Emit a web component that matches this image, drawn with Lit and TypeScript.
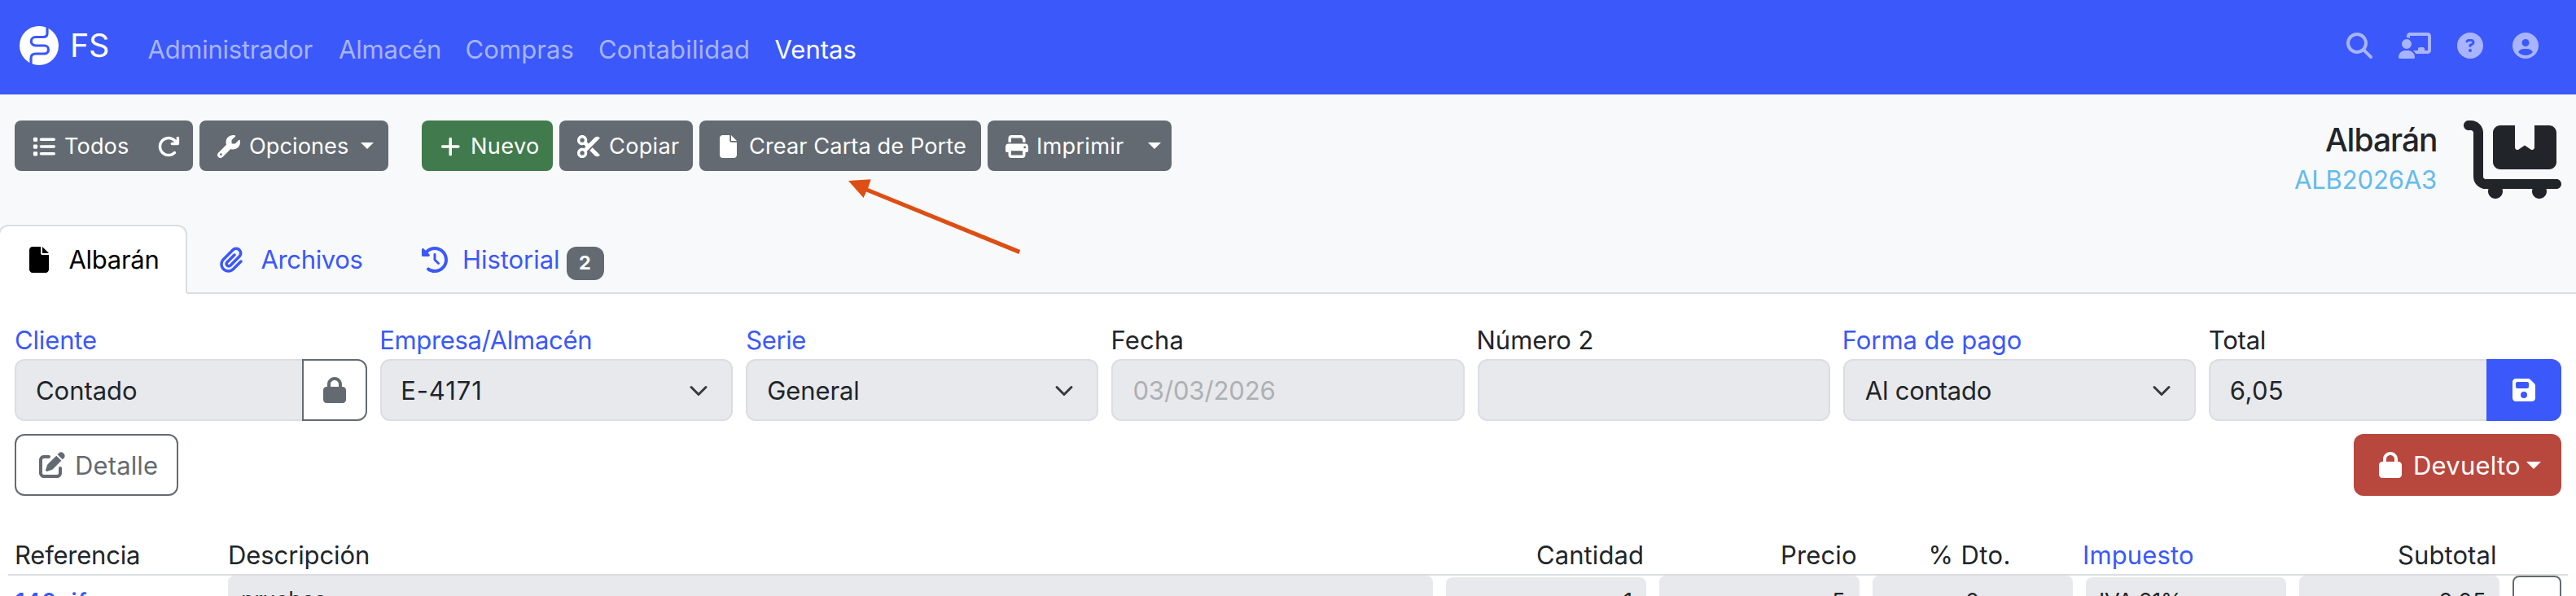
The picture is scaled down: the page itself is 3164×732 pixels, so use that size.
import { LitElement, html, css, svg, nothing } from "lit";
import { customElement } from "lit/decorators.js";

const FAMILY = 'Inter, "Liberation Sans", sans-serif';

const ICONS: Record<string, [number, string]> = {
  list: [512, "M40 48C26.7 48 16 58.7 16 72v48c0 13.3 10.7 24 24 24H88c13.3 0 24-10.7 24-24V72c0-13.3-10.7-24-24-24H40zM192 64c-17.7 0-32 14.3-32 32s14.3 32 32 32H480c17.7 0 32-14.3 32-32s-14.3-32-32-32H192zm0 160c-17.7 0-32 14.3-32 32s14.3 32 32 32H480c17.7 0 32-14.3 32-32s-14.3-32-32-32H192zm0 160c-17.7 0-32 14.3-32 32s14.3 32 32 32H480c17.7 0 32-14.3 32-32s-14.3-32-32-32H192zM16 232v48c0 13.3 10.7 24 24 24H88c13.3 0 24-10.7 24-24V232c0-13.3-10.7-24-24-24H40c-13.3 0-24 10.7-24 24zM40 368c-13.3 0-24 10.7-24 24v48c0 13.3 10.7 24 24 24H88c13.3 0 24-10.7 24-24V392c0-13.3-10.7-24-24-24H40z"],
  redo: [512, "M386.3 160H336c-17.7 0-32 14.3-32 32s14.3 32 32 32H464c17.7 0 32-14.3 32-32V64c0-17.7-14.3-32-32-32s-32 14.3-32 32v51.2L414.4 97.6c-87.5-87.5-229.3-87.5-316.8 0s-87.5 229.3 0 316.8s229.3 87.5 316.8 0c12.5-12.5 12.5-32.8 0-45.3s-32.8-12.5-45.3 0c-62.5 62.5-163.8 62.5-226.3 0s-62.5-163.8 0-226.3s163.8-62.5 226.3 0L386.3 160z"],
  wrench: [512, "M352 320c88.4 0 160-71.6 160-160c0-15.3-2.2-30.1-6.2-44.2c-3.1-10.8-16.4-13.2-24.3-5.3l-76.8 76.8c-3 3-7.1 4.7-11.3 4.7H336c-8.8 0-16-7.2-16-16V118.6c0-4.2 1.7-8.3 4.7-11.3l76.8-76.8c7.9-7.9 5.4-21.2-5.3-24.3C382.1 2.2 367.3 0 352 0C263.6 0 192 71.6 192 160c0 19.1 3.4 37.5 9.5 54.5L19.9 396.1C7.2 408.8 0 426.1 0 444.1C0 481.6 30.4 512 67.9 512c18 0 35.3-7.2 48-19.9L297.5 310.5c17 6.2 35.4 9.5 54.5 9.5zM80 408a24 24 0 1 1 0 48 24 24 0 1 1 0-48z"],
  plus: [448, "M256 80c0-17.7-14.3-32-32-32s-32 14.3-32 32V224H48c-17.7 0-32 14.3-32 32s14.3 32 32 32H192V432c0 17.7 14.3 32 32 32s32-14.3 32-32V288H400c17.7 0 32-14.3 32-32s-14.3-32-32-32H256V80z"],
  scissors: [512, "M256 192l-39.5-39.5c4.9-12.6 7.5-26.2 7.5-40.5C224 50.1 173.9 0 112 0S0 50.1 0 112s50.1 112 112 112c14.3 0 27.9-2.7 40.5-7.5L192 256l-39.5 39.5c-12.6-4.9-26.2-7.5-40.5-7.5C50.1 288 0 338.1 0 400s50.1 112 112 112s112-50.1 112-112c0-14.3-2.7-27.9-7.5-40.5L499.2 76.8c7.1-7.1 7.1-18.5 0-25.6c-28.3-28.3-74.1-28.3-102.4 0L256 192zm22.6 150.6L396.8 460.8c28.3 28.3 74.1 28.3 102.4 0c7.1-7.1 7.1-18.5 0-25.6L342.6 278.6l-64 64zM64 112a48 48 0 1 1 96 0 48 48 0 1 1 -96 0zm48 240a48 48 0 1 1 0 96 48 48 0 1 1 0-96z"],
  file: [384, "M0 64C0 28.7 28.7 0 64 0H224V128c0 17.7 14.3 32 32 32H384V448c0 35.3-28.7 64-64 64H64c-35.3 0-64-28.7-64-64V64zm384 64H256V0L384 128z"],
  print: [512, "M128 0C92.7 0 64 28.7 64 64v96h64V64H354.7L384 93.3V160h64V93.3c0-17-6.7-33.3-18.7-45.3L400 18.7C388 6.7 371.7 0 354.7 0H128zM384 352v32 64H128V384 368 352H384zm64 32h32c17.7 0 32-14.3 32-32V256c0-35.3-28.7-64-64-64H64c-35.3 0-64 28.7-64 64v96c0 17.7 14.3 32 32 32H64v64c0 35.3 28.7 64 64 64H384c35.3 0 64-28.7 64-64V384zM432 248a24 24 0 1 1 0 48 24 24 0 1 1 0-48z"],
  clip: [448, "M364.2 83.8c-24.4-24.4-64-24.4-88.4 0l-184 184c-42.1 42.1-42.1 110.3 0 152.4s110.3 42.1 152.4 0l152-152c10.9-10.9 28.7-10.9 39.6 0s10.9 28.7 0 39.6l-152 152c-64 64-167.6 64-231.6 0s-64-167.6 0-231.6l184-184c46.3-46.3 121.3-46.3 167.6 0s46.3 121.3 0 167.6l-176 176c-28.6 28.6-75 28.6-103.6 0s-28.6-75 0-103.6l144-144c10.9-10.9 28.7-10.9 39.6 0s10.9 28.7 0 39.6l-144 144c-6.7 6.7-6.7 17.7 0 24.4s17.7 6.7 24.4 0l176-176c24.4-24.4 24.4-64 0-88.4z"],
  history: [512, "M75 75L41 41C25.9 25.9 0 36.6 0 57.9V168c0 13.3 10.7 24 24 24H134.1c21.4 0 32.1-25.9 17-41l-30.8-30.8C155 85.5 203 64 256 64c106 0 192 86 192 192s-86 192-192 192c-40.8 0-78.6-12.7-109.7-34.4c-14.5-10.1-34.4-6.6-44.6 7.9s-6.6 34.4 7.9 44.6C151.2 495 201.7 512 256 512c141.4 0 256-114.6 256-256S397.4 0 256 0C185.3 0 121.3 28.7 75 75zm181 53c-13.3 0-24 10.7-24 24V256c0 6.4 2.5 12.5 7 17l72 72c9.4 9.4 24.6 9.4 33.9 0s9.4-24.6 0-33.9l-65-65V152c0-13.3-10.7-24-24-24z"],
  search: [512, "M416 208c0 45.9-14.9 88.3-40 122.7L502.6 457.4c12.5 12.5 12.5 32.8 0 45.3s-32.8 12.5-45.3 0L330.7 376c-34.4 25.2-76.8 40-122.7 40C93.1 416 0 322.9 0 208S93.1 0 208 0S416 93.1 416 208zM208 352a144 144 0 1 0 0-288 144 144 0 1 0 0 288z"],
  teacher: [640, "M160 64c0-35.3 28.7-64 64-64H576c35.3 0 64 28.7 64 64V352c0 35.3-28.7 64-64 64H336.8c-11.8-25.5-29.9-47.5-52.4-64H384V320c0-17.7 14.3-32 32-32h64c17.7 0 32 14.3 32 32v32h64V64L224 64v49.1C205.2 102.2 183.3 96 160 96V64zm0 64a96 96 0 1 1 0 192 96 96 0 1 1 0-192zM133.3 352h53.3C260.3 352 320 411.7 320 485.3c0 14.7-11.9 26.7-26.7 26.7H26.7C11.9 512 0 500.1 0 485.3C0 411.7 59.7 352 133.3 352z"],
  question: [512, "M256 512A256 256 0 1 0 256 0a256 256 0 1 0 0 512zM169.8 165.3c7.9-22.3 29.1-37.3 52.8-37.3h58.3c34.9 0 63.1 28.3 63.1 63.1c0 22.6-12.1 43.5-31.7 54.8L280 264.4c-.2 13-10.9 23.6-24 23.6c-13.3 0-24-10.7-24-24V250.5c0-8.6 4.6-16.5 12.1-20.8l44.3-25.4c4.7-2.7 7.6-7.7 7.6-13.1c0-8.4-6.8-15.1-15.1-15.1H222.6c-3.4 0-6.4 2.1-7.5 5.3l-.4 1.2c-4.4 12.5-18.2 19-30.6 14.6s-19-18.2-14.6-30.6l.4-1.2zM224 352a32 32 0 1 1 64 0 32 32 0 1 1 -64 0z"],
  user: [512, "M399 384.2C376.9 345.8 335.4 320 288 320H224c-47.4 0-88.9 25.8-111 64.2c35.2 39.2 86.2 63.8 143 63.8s107.8-24.7 143-63.8zM0 256a256 256 0 1 1 512 0A256 256 0 1 1 0 256zm256 16a72 72 0 1 0 0-144 72 72 0 1 0 0 144z"],
  cart: [640, "M32 0C14.3 0 0 14.3 0 32S14.3 64 32 64H48c8.8 0 16 7.2 16 16V368c0 44.2 35.8 80 80 80h18.7c-1.8 5-2.7 10.4-2.7 16c0 26.5 21.5 48 48 48s48-21.5 48-48c0-5.6-1-11-2.7-16H450.7c-1.8 5-2.7 10.4-2.7 16c0 26.5 21.5 48 48 48s48-21.5 48-48c0-5.6-1-11-2.7-16H608c17.7 0 32-14.3 32-32s-14.3-32-32-32H144c-8.8 0-16-7.2-16-16V80C128 35.8 92.2 0 48 0H32zM192 80V272c0 26.5 21.5 48 48 48H560c26.5 0 48-21.5 48-48V80c0-26.5-21.5-48-48-48H464V176c0 5.9-3.2 11.3-8.5 14.1s-11.5 2.5-16.4-.8L400 163.2l-39.1 26.1c-4.9 3.3-11.2 3.6-16.4 .8s-8.5-8.2-8.5-14.1V32H240c-26.5 0-48 21.5-48 48z"],
  lock: [448, "M144 144v48H304V144c0-44.2-35.8-80-80-80s-80 35.8-80 80zM80 192V144C80 64.5 144.5 0 224 0s144 64.5 144 144v48h16c35.3 0 64 28.7 64 64V448c0 35.3-28.7 64-64 64H64c-35.3 0-64-28.7-64-64V256c0-35.3 28.7-64 64-64H80z"],
  save: [448, "M64 32C28.7 32 0 60.7 0 96V416c0 35.3 28.7 64 64 64H384c35.3 0 64-28.7 64-64V173.3c0-17-6.7-33.3-18.7-45.3L352 50.7C340 38.7 323.7 32 306.7 32H64zm0 96c0-17.7 14.3-32 32-32H288c17.7 0 32 14.3 32 32v64c0 17.7-14.3 32-32 32H96c-17.7 0-32-14.3-32-32V128zM224 288a64 64 0 1 1 0 128 64 64 0 1 1 0-128z"],
  edit: [512, "M471.6 21.7c-21.9-21.9-57.3-21.9-79.2 0L362.3 51.7l97.9 97.9 30.1-30.1c21.9-21.9 21.9-57.3 0-79.2L471.6 21.7zm-299.2 220c-6.1 6.1-10.8 13.6-13.5 21.9l-29.6 88.8c-2.9 8.6-.6 18.1 5.8 24.6s15.9 8.7 24.6 5.8l88.8-29.6c8.2-2.7 15.7-7.4 21.9-13.5L437.7 172.3 339.7 74.3 172.4 241.7zM96 64C43 64 0 107 0 160V416c0 53 43 96 96 96H352c53 0 96-43 96-96V320c0-17.7-14.3-32-32-32s-32 14.3-32 32v96c0 17.7-14.3 32-32 32H96c-17.7 0-32-14.3-32-32V160c0-17.7 14.3-32 32-32h96c17.7 0 32-14.3 32-32s-14.3-32-32-32H96z"],
};

const icon = (name: string, size = 32) => {
  const [w, d] = ICONS[name];
  return html`<svg class="icon" width=${(w / 512) * size} height=${size} viewBox="0 0 ${w} 512">
    ${svg`<path fill="currentColor" d=${d}></path>`}
  </svg>`;
};

/* Icon centred in a slot 1.25 times as wide as its size */
const slot = (name: string, size = 28) =>
  html`<span class="slot ${size === 28 ? "small" : ""}">${icon(name, size)}</span>`;

type Face = "md" | "sm" | "brand" | "title" | "badge" | "strong";
const FACES: Record<Face, [number, number]> = {
  md: [31, 400],
  sm: [27.2, 400],
  brand: [39.5, 400],
  title: [39, 500],
  badge: [23.5, 700],
  strong: [27, 600],
};
const pen = document.createElement("canvas").getContext("2d")!;

/* A run of text tracked so that its ink is exactly `width` pixels wide */
const run = (text: string, width: number, face: Face = "md") => {
  const [size, weight] = FACES[face];
  pen.font = `${weight} ${size}px ${FAMILY}`;
  const m = pen.measureText(text);
  const ink = m.actualBoundingBoxLeft + m.actualBoundingBoxRight;
  const track = text.length > 1 ? (width - ink) / (text.length - 1) : 0;
  return html`<span
    class="run ${face}"
    style="width:${width}px;text-indent:${m.actualBoundingBoxLeft.toFixed(2)}px;letter-spacing:${track.toFixed(3)}px"
    >${text}</span
  >`;
};

const caret = html`<svg class="caret" width="16" height="8" viewBox="0 0 16 8"><path d="M0 0h16L8 8z" fill="currentColor" /></svg>`;
const chevron = html`<svg class="chevron" width="24" height="24" viewBox="0 0 16 16">
  <path d="m2 5 6 6 6-6" fill="none" stroke="#343a40" stroke-width="2" stroke-linecap="round" stroke-linejoin="round" />
</svg>`;

interface Field {
  label: string;
  labelWidth: number;
  link?: boolean;
  value: string;
  valueWidth: number;
  select?: boolean;
  muted?: boolean;
  addon?: "lock" | "save";
}

const FIELDS: Field[] = [
  { label: "Cliente", labelWidth: 99, link: true, value: "Contado", valueWidth: 122, addon: "lock" },
  { label: "Empresa/Almacén", labelWidth: 257, link: true, value: "E-4171", valueWidth: 95, select: true },
  { label: "Serie", labelWidth: 72, link: true, value: "General", valueWidth: 111, select: true },
  { label: "Fecha", labelWidth: 86, value: "03/03/2026", valueWidth: 173, muted: true },
  { label: "Número 2", labelWidth: 140, value: "", valueWidth: 0 },
  { label: "Forma de pago", labelWidth: 217, link: true, value: "Al contado", valueWidth: 154, select: true },
  { label: "Total", labelWidth: 68, value: "6,05", valueWidth: 63, addon: "save" },
];

@customElement("app-root")
export class AppRoot extends LitElement {
  static styles = css`
    :host {
      display: block;
      position: relative;
      height: 732px;
      overflow: hidden;
      background: #fff;
      color: #212529;
      font-family: Inter, "Liberation Sans", sans-serif;
    }
    * { box-sizing: border-box; }
    .icon, .caret, .chevron { display: block; flex: none; }
    .run { display: block; flex: none; white-space: pre; line-height: 48px; }
    .md { font-size: 31px; }
    .sm { font-size: 27.2px; }
    .brand { font-size: 39.5px; }
    .title { font-size: 39px; font-weight: 500; }
    .badge { font-size: 23.5px; font-weight: 700; }
    .strong { font-size: 27px; font-weight: 600; }
    .slot { display: flex; justify-content: center; flex: none; width: 40px; }
    .slot.small { width: 35px; }

    .navbar {
      display: flex;
      align-items: center;
      height: 116px;
      padding: 0 46px 4px 24px;
      background: #3b58fb;
      color: #fff;
    }
    .logo { display: block; margin: 0 17px 0 0; }
    .menu { display: flex; gap: 32.5px; margin-left: 48.5px; padding-top: 9px; }
    .menu > *, .tools { color: #a8b4fd; }
    .menu > .current { color: #fff; }
    .tools { display: flex; gap: 32px; margin-left: auto; }
    .tools > :last-child { margin-left: 4px; }

    .header {
      display: flex;
      flex-direction: column;
      justify-content: space-between;
      height: 245px;
      padding-top: 32px;
      background: #f8f9fb;
    }
    .toolbar { display: flex; height: 96px; padding: 0 18px; align-items: flex-start; }
    .btn {
      display: flex;
      align-items: center;
      height: 62px;
      margin-right: 8px;
      padding: 2px 0 0 18px;
      border-radius: 8px;
      background: #636a72;
      color: #fff;
    }
    .btn .run { margin-left: 9px; }
    .todos { width: 219px; }
    .todos > .icon { margin-left: 36px; }
    .opciones { width: 232px; margin-right: 41px; }
    .opciones .caret { margin-left: 16px; }
    .nuevo { width: 161px; background: #417a4c; }
    .copiar { width: 164px; }
    .carta { width: 346px; }
    .imprimir { width: 226px; margin-right: 0; }
    .imprimir .caret { margin-left: 30px; }
    .btn .caret { margin-top: -3px; }

    .heading { display: flex; margin-left: auto; }
    .heading-text { display: flex; flex-direction: column; align-items: flex-end; padding: 0 1px 0 0; margin-right: 33px; }
    .code { color: #64bbec; padding-top: 1px; }
    .tabs { display: flex; height: 85px; border-bottom: 2px solid #dbdde3; }
    .tab { display: flex; align-items: center; height: 85px; color: #3b58fb; }
    .tab.active {
      width: 232px;
      margin-left: -2px;
      padding-left: 28px;
      background: #fff;
      border: 2px solid #dbdde3;
      border-bottom-color: #fff;
      border-radius: 12px 12px 0 0;
      color: #000;
    }
    .tab.archivos { padding-left: 34px; }
    .tab.historial { padding-left: 69px; }
    .tab .run { margin-left: 16.5px; }
    .count {
      display: flex;
      align-items: center;
      justify-content: center;
      width: 46px;
      height: 41px;
      margin: 9px 0 0 10px;
      border-radius: 12px;
      background: #636a72;
      color: #fff;
    }
    .count .run { margin: 0; }

    .fields { display: grid; grid-template-columns: repeat(7, 1fr); gap: 16px; padding: 32px 18px 0; }
    .label { height: 48px; padding: 1px 0 0 1px; }
    .link { color: #3b58fb; }
    .control { display: flex; height: 76px; }
    .input {
      display: flex;
      align-items: center;
      justify-content: space-between;
      flex: 1;
      padding: 1px 28px 0 25px;
      border: 2px solid #dcdde3;
      border-radius: 12px;
      background: #e8e9ec;
    }
    .muted { color: #adb0b3; }
    .joined { border-right: 0; border-radius: 12px 0 0 12px; }
    .addon {
      display: flex;
      align-items: center;
      justify-content: center;
      border-radius: 0 12px 12px 0;
    }
    .addon.lock { width: 80px; border: 2px solid #636a72; color: #636a72; }
    .addon.save { width: 92px; background: #3b58fb; color: #fff; }

    .actions { display: flex; justify-content: space-between; padding: 16px 18px 0; }
    .detalle, .devuelto { display: flex; align-items: center; height: 76px; border-radius: 12px; }
    .detalle { width: 201px; padding-left: 24px; border: 2px solid #636a72; color: #636a72; }
    .detalle .run { margin-left: 10px; padding-top: 1px; }
    .devuelto { width: 255px; padding-left: 25px; background: #b8473d; color: #fff; }
    .devuelto .run { margin-left: 10px; padding-top: 1px; }
    .devuelto .caret { margin-left: 9px; width: 18px; height: 9px; }

    .lines { margin: 48px 10px 0; }
    .row {
      display: grid;
      grid-template-columns: 246px 1480px repeat(5, 246px) 60px;
      gap: 16px;
      padding: 0 8px;
    }
    .head { border-bottom: 2px solid #dbdde3; height: 50px; padding-top: 1px; }
    .head > * { margin-left: 2px; }
    .head > .right { justify-self: end; margin-right: 5px; }
    .head > .center { justify-self: center; margin-right: 9px; }
    .head > .tax { margin-left: -2px; }
    .body { align-items: start; }
    .cell {
      display: flex;
      height: 66px;
      padding: 8px 18px 0;
      border-radius: 8px;
      background: #e8e9ec;
    }
    .cell.area { padding-top: 6px; }
    .cell.low { margin-top: 2px; padding-top: 6px; }
    .cell.right { justify-content: flex-end; }
    .cell.center { justify-content: center; }
    .ref { padding: 8px 0 0 2px; }
    .more { height: 66px; border: 2px solid #636a72; border-radius: 8px; }

    .arrow { position: absolute; left: 1040px; top: 216px; }
  `;

  private field(f: Field) {
    return html`<div class="field">
      <div class="label ${f.link ? "link" : ""}">${run(f.label, f.labelWidth)}</div>
      <div class="control">
        <div class="input ${f.addon ? "joined" : ""} ${f.muted ? "muted" : ""}">
          ${f.value ? run(f.value, f.valueWidth) : nothing} ${f.select ? chevron : nothing}
        </div>
        ${f.addon ? html`<div class="addon ${f.addon}">${icon(f.addon)}</div>` : nothing}
      </div>
    </div>`;
  }

  render() {
    return html`
      <nav class="navbar">
        <svg class="logo" width="48" height="48" viewBox="0 0 48 48">
          <circle cx="24" cy="24" r="24" fill="#fff" />
          <path
            d="M34 0V9Q34 13.5 29 13.5H19.5A5.2 5.2 0 0 0 19.5 24H30.5A5 5 0 0 1 30.5 34H20Q14 34 14 39.5V48"
            fill="none" stroke="#3b58fb" stroke-width="3.2"
          />
        </svg>
        ${run("FS", 44, "brand")}
        <div class="menu">
          <span>${run("Administrador", 202)}</span>
          <span>${run("Almacén", 124)}</span>
          <span>${run("Compras", 131)}</span>
          <span>${run("Contabilidad", 183)}</span>
          <span class="current">${run("Ventas", 99)}</span>
        </div>
        <div class="tools">${icon("search")}${icon("teacher")}${icon("question")}${icon("user")}</div>
      </nav>

      <header class="header">
        <div class="toolbar">
          <div class="btn todos">${slot("list")}${run("Todos", 77, "sm")}${icon("redo", 28)}</div>
          <div class="btn opciones">${slot("wrench")}${run("Opciones", 120, "sm")}${caret}</div>
          <div class="btn nuevo">${slot("plus")}${run("Nuevo", 81, "sm")}</div>
          <div class="btn copiar">${slot("scissors")}${run("Copiar", 85, "sm")}</div>
          <div class="btn carta">${slot("file")}${run("Crear Carta de Porte", 265, "sm")}</div>
          <div class="btn imprimir">${slot("print")}${run("Imprimir", 105, "sm")}${caret}</div>
          <div class="heading">
            <div class="heading-text">
              ${run("Albarán", 136, "title")}
              <span class="code">${run("ALB2026A3", 174)}</span>
            </div>
            ${icon("cart", 96)}
          </div>
        </div>
        <div class="tabs">
          <div class="tab active">${slot("file", 32)}${run("Albarán", 109)}</div>
          <div class="tab archivos">${slot("clip", 32)}${run("Archivos", 124)}</div>
          <div class="tab historial">
            ${slot("history", 32)}${run("Historial", 116)}
            <span class="count">${run("2", 14, "badge")}</span>
          </div>
        </div>
      </header>

      <section class="fields">${FIELDS.map((f) => this.field(f))}</section>

      <div class="actions">
        <div class="detalle">${slot("edit", 32)}${run("Detalle", 99)}</div>
        <div class="devuelto">${slot("lock", 32)}${run("Devuelto", 128)}${caret}</div>
      </div>

      <section class="lines">
        <div class="row head">
          ${run("Referencia", 151)} ${run("Descripción", 170)}
          <span class="right">${run("Cantidad", 129)}</span>
          <span class="right">${run("Precio", 90)}</span>
          <span class="center">${run("% Dto.", 96)}</span>
          <span class="tax link">${run("Impuesto", 133)}</span>
          <span class="right">${run("Subtotal", 119)}</span>
        </div>
        <div class="row body">
          <div class="ref link">${run("140cif", 87, "strong")}</div>
          <div class="cell area">${run("pruebas", 101, "sm")}</div>
          <div class="cell low right">${run("1", 9, "sm")}</div>
          <div class="cell right">${run("5", 14, "sm")}</div>
          <div class="cell center">${run("0", 16, "sm")}</div>
          <div class="cell low">${run("IVA 21%", 98, "sm")}</div>
          <div class="cell right">${run("6.05", 56, "sm")}</div>
          <div class="more"></div>
        </div>
      </section>

      <svg class="arrow" width="216" height="100" viewBox="1040 216 216 100">
        <path d="M1042 222L1069.7 220.2L1066.2 231L1253.2 307L1251.4 312L1064 235.5L1060.6 243Z" fill="#dd4e14" />
      </svg>
    `;
  }
}
